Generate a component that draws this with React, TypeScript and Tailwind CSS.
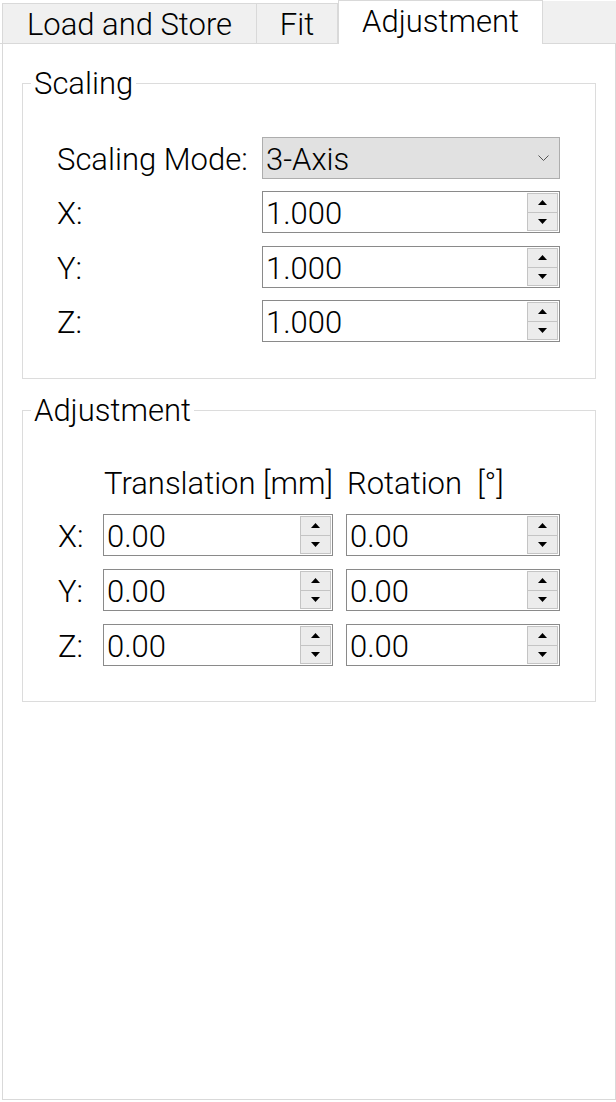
import React from "react";

function Up() {
  return (
    <svg width="9" height="5" viewBox="0 0 9 5">
      <path d="M0 5 L4.5 0 L9 5 Z" fill="#000" />
    </svg>
  );
}
function Down() {
  return (
    <svg width="9" height="5" viewBox="0 0 9 5">
      <path d="M0 0 L9 0 L4.5 5 Z" fill="#000" />
    </svg>
  );
}

function Spin({ value, className }: { value: string; className: string }) {
  return (
    <div className={`flex h-[42px] border border-[#8a8a8a] bg-white ${className}`}>
      <div className="flex flex-1 items-center pl-[3px] pt-[3px] text-[31px] leading-[36px] text-black">{value}</div>
      <div className="my-[1px] mr-[1px] flex w-[31px] flex-col">
        <div className="flex flex-1 items-center justify-center border border-[#c4c4c4] bg-[#ececec]">
          <Up />
        </div>
        <div className="flex flex-1 items-center justify-center border border-t-0 border-[#c4c4c4] bg-[#ececec]">
          <Down />
        </div>
      </div>
    </div>
  );
}

function Group({ title, children, className }: { title: string; children: React.ReactNode; className: string }) {
  return (
    <div className={`mx-[19px] border border-[#dcdcdc] ${className}`}>
      <div className="-mt-[18px] ml-[8px] w-fit bg-white px-[3px] text-[31px] leading-[36px] text-black">{title}</div>
      {children}
    </div>
  );
}

export default function App() {
  return (
    <div className="h-[1102px] w-[616px] overflow-hidden bg-white font-[Roboto,sans-serif] font-light text-black">
      <div className="flex h-[44px]">
        <div className="w-[2px] border-b border-[#d9d9d9]" />
        <div className="mt-[3px] flex w-[255px] items-center justify-center border border-[#d9d9d9] bg-[#f0f0f0] pt-[2px] text-[31px] leading-[36px]">
          Load and Store
        </div>
        <div className="mt-[3px] flex w-[81px] items-center justify-center border border-l-0 border-[#d9d9d9] bg-[#f0f0f0] pt-[2px] text-[31px] leading-[36px]">
          Fit
        </div>
        <div className="flex w-[205px] items-start justify-center border border-b-0 border-[#d9d9d9] bg-white pt-[3px] text-[31px] leading-[36px]">
          Adjustment
        </div>
        <div className="mt-[1px] flex-1 border-b border-[#d9d9d9] bg-[#f0f0f0]" />
      </div>
      <div className="ml-[2px] flex h-[1056px] w-[614px] flex-col border-x border-b border-[#d9d9d9] pt-[39px]">
        <Group title="Scaling" className="pb-[36px]">
          <div className="flex flex-col pl-[34px] pt-[35px] text-[31px] leading-[36px]">
            <div className="flex h-[42px] items-center">
              <div className="w-[205px] pt-[3px]">Scaling Mode:</div>
              <div className="flex h-[42px] w-[298px] items-center justify-between border border-[#adadad] bg-[#e1e1e1] pl-[3px] pr-[10px]">
                <span className="pt-[3px]">3-Axis</span>
                <svg width="11" height="6" viewBox="0 0 11 6">
                  <path d="M0.5 0.5 L5.5 5.5 L10.5 0.5" stroke="#555" strokeWidth="1" fill="none" />
                </svg>
              </div>
            </div>
            <div className="mt-[12px] flex h-[42px] items-center">
              <div className="w-[205px] pt-[3px]">X:</div>
              <Spin value="1.000" className="w-[298px]" />
            </div>
            <div className="mt-[13px] flex h-[42px] items-center">
              <div className="w-[205px] pt-[3px]">Y:</div>
              <Spin value="1.000" className="w-[298px]" />
            </div>
            <div className="mt-[12px] flex h-[42px] items-center">
              <div className="w-[205px] pt-[3px]">Z:</div>
              <Spin value="1.000" className="w-[298px]" />
            </div>
          </div>
        </Group>
        <Group title="Adjustment" className="mt-[31px] pb-[35px]">
          <div className="flex flex-col pl-[35px] pt-[37px] text-[31px] leading-[36px]">
            <div className="flex h-[36px] items-center">
              <div className="w-[46px]" />
              <div className="w-[243px]">Translation [mm]</div>
              <div>Rotation&nbsp;&nbsp;[°]</div>
            </div>
            {["X:", "Y:", "Z:"].map((l, i) => (
              <div key={l} className={`flex h-[42px] items-center ${i === 0 ? "mt-[12px]" : "mt-[13px]"}`}>
                <div className="w-[45px] pt-[3px]">{l}</div>
                <Spin value="0.00" className="w-[230px]" />
                <div className="w-[13px]" />
                <Spin value="0.00" className="w-[214px]" />
              </div>
            ))}
          </div>
        </Group>
      </div>
    </div>
  );
}
